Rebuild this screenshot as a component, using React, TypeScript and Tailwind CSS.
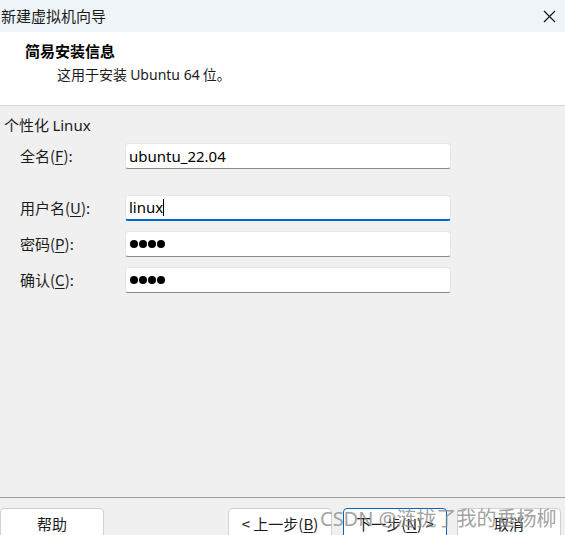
import React from "react";

const cjk = { fontFamily: '"Noto Sans CJK SC", "Noto Sans", sans-serif' };
const latin = { fontFamily: '"Noto Sans", "Noto Sans CJK SC", sans-serif' };

interface FieldProps {
  label: string;
  mnemonic: string;
  value?: string;
  secret?: boolean;
  focused?: boolean;
  className?: string;
}

const Field: React.FC<FieldProps> = ({ label, mnemonic, value, secret, focused, className }) => (
  <div className={`flex items-center ${className ?? ""}`}>
    <div className="w-[125px] pl-[20px] text-[15px] text-[#1b1b1b]">
      {label}(<span className="underline underline-offset-2">{mnemonic}</span>):
    </div>
    <div
      className={`h-[26px] w-[326px] bg-white rounded-[3px] border border-[#e6e6e6] flex items-center pl-[3px] ${
        focused ? "border-b-2 border-b-[#0067c0]" : "border-b-[#8c8c8c]"
      }`}
    >
      {secret ? (
        <div className="flex gap-[1px] pl-[1px]">
          {[0, 1, 2, 3].map((i) => (
            <span key={i} className="w-[8px] h-[8px] rounded-full bg-black" />
          ))}
        </div>
      ) : (
        <span className="text-[15px] text-black leading-none" style={latin}>
          {value}
        </span>
      )}
      {focused && <span className="w-[1px] h-[17px] bg-black" />}
    </div>
  </div>
);

const Button: React.FC<{ children: React.ReactNode; primary?: boolean; className?: string }> = ({
  children,
  primary,
  className,
}) => (
  <div
    className={`h-[32px] w-[104px] bg-white rounded-[4px] border flex justify-center pt-[4px] text-[15px] text-[#1b1b1b] ${
      primary ? "border-[#0067c0]" : "border-[#d0d0d0]"
    } ${className ?? ""}`}
  >
    {children}
  </div>
);

export default function App() {
  return (
    <div className="w-[565px] h-[535px] overflow-hidden flex flex-col bg-[#f0f0f0] relative" style={cjk}>
      <div className="h-[32px] bg-[#eff4f9] flex items-center justify-between pl-[1px] pr-[8px]">
        <span className="text-[15px] text-[#1b1b1b]">新建虚拟机向导</span>
        <svg width="13" height="13" viewBox="0 0 13 13" className="mr-[1px]">
          <path d="M1 1 L12 12 M12 1 L1 12" stroke="#1b1b1b" strokeWidth="1.2" fill="none" />
        </svg>
      </div>

      <div className="h-[74px] bg-white border-b border-[#d6d6d6] pt-[9px] pl-[25px]">
        <div className="text-[15px] font-bold text-black leading-[20px]">简易安装信息</div>
        <div className="pl-[32px] pt-[3px] text-[14px] text-[#1b1b1b] leading-[20px]">
          这用于安装 <span style={latin}>Ubuntu 64</span> 位。
        </div>
      </div>

      <div className="flex-1 pt-[9px]">
        <div className="pl-[4px] text-[15px] text-[#1b1b1b] leading-[20px]">
          个性化 <span style={latin}>Linux</span>
        </div>
        <Field label="全名" mnemonic="F" value="ubuntu_22.04" className="mt-[8px]" />
        <Field label="用户名" mnemonic="U" value="linux" focused className="mt-[26px]" />
        <Field label="密码" mnemonic="P" secret className="mt-[10px]" />
        <Field label="确认" mnemonic="C" secret className="mt-[10px]" />
      </div>

      <div className="h-[38px] border-t border-[#a0a0a0] flex items-start pt-[10px] pr-[4px]">
        <Button>帮助</Button>
        <div className="flex-1" />
        <Button>
          &lt; 上一步(<span className="underline underline-offset-2">B</span>)
        </Button>
        <Button primary className="ml-[11px]">
          下一步(<span className="underline underline-offset-2">N</span>) &gt;
        </Button>
        <Button className="ml-[10px]">取消</Button>
      </div>

      <div className="absolute left-[320px] top-[504px] text-[20px] text-[#8a8a8a]/80 leading-[28px] pointer-events-none whitespace-nowrap">
        <span style={latin}>CSDN @</span>涟拢了我的垂杨柳
      </div>
    </div>
  );
}
